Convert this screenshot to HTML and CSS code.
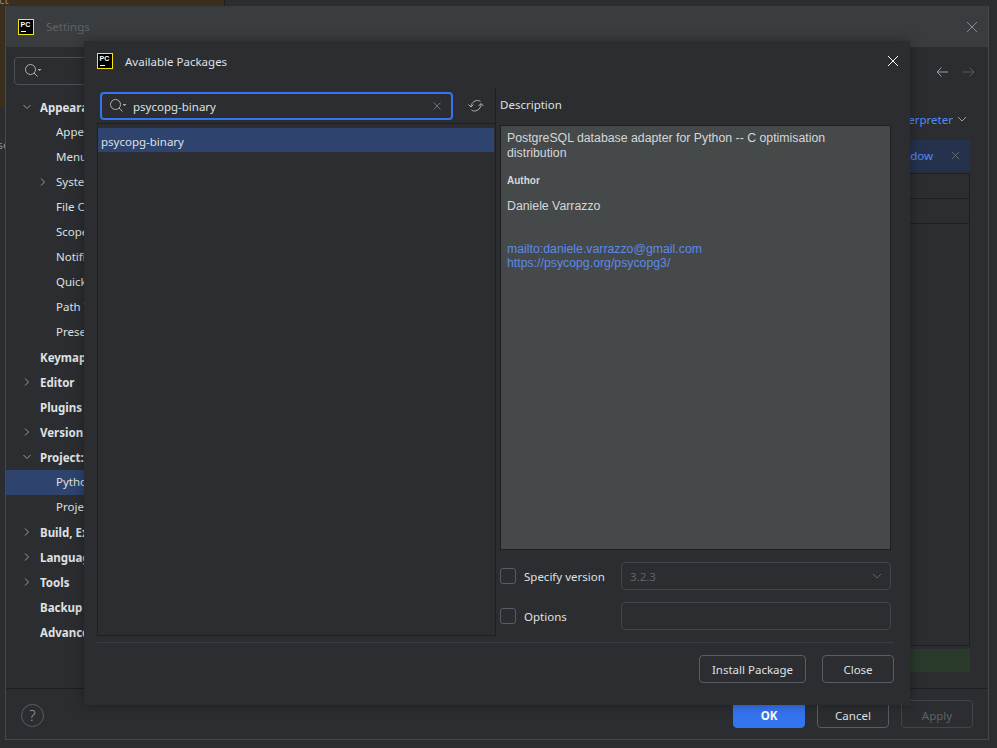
FILE: index.html
```html
<!DOCTYPE html>
<html>
<head>
    <title>Available Packages</title>
    <link rel="stylesheet" href="styles.css">
</head>
<body>
    <div class="desktop">
        <div class="project-strip"><span class="strip-text">Project</span></div>
        <span class="side-text">Use</span>

        <div class="settings">
            <div class="settings-title">
                <svg class="pc-icon" viewBox="0 0 16 16"><rect x="0.5" y="0.5" width="15" height="15" fill="#000" stroke="#f5e614"/><text x="2.500" y="8" class="pc-text">PC</text><rect x="3" y="12" width="5" height="1" fill="#fff"/></svg>
                <span class="settings-name">Settings</span>
                <svg class="close-icon dim" viewBox="0 0 12 12"><path d="M1 1l10 10M11 1L1 11"/></svg>
            </div>
            <div class="settings-body">
                <div class="sidebar">
                    <div class="side-search">
                        <svg class="search-icon" viewBox="0 0 17 14"><circle cx="5.500" cy="5.500" r="5"/><path d="M9 9l3.500 3.500"/><path class="caret" d="M12.500 5h4l-2 2z"/></svg>
                    </div>
                    <div class="tree">
                        <div class="row top"><svg class="chev" viewBox="0 0 10 10"><path d="M1.500 3l3.500 3.500L8.500 3"/></svg>Appearance &amp; Behavior</div>
                        <div class="row sub">Appearance</div>
                        <div class="row sub">Menus and Toolbars</div>
                        <div class="row sub"><svg class="chev" viewBox="0 0 10 10"><path d="M3 1.500l3.500 3.500L3 8.500"/></svg>System Settings</div>
                        <div class="row sub">File Colors</div>
                        <div class="row sub">Scopes</div>
                        <div class="row sub">Notifications</div>
                        <div class="row sub">Quick Lists</div>
                        <div class="row sub">Path Variables</div>
                        <div class="row sub">Presentation Assistant</div>
                        <div class="row top">Keymap</div>
                        <div class="row top"><svg class="chev" viewBox="0 0 10 10"><path d="M3 1.500l3.500 3.500L3 8.500"/></svg>Editor</div>
                        <div class="row top">Plugins</div>
                        <div class="row top"><svg class="chev" viewBox="0 0 10 10"><path d="M3 1.500l3.500 3.500L3 8.500"/></svg>Version Control</div>
                        <div class="row top"><svg class="chev" viewBox="0 0 10 10"><path d="M1.500 3l3.500 3.500L8.500 3"/></svg>Project: demo</div>
                        <div class="row sub selected">Python Interpreter</div>
                        <div class="row sub">Project Structure</div>
                        <div class="row top"><svg class="chev" viewBox="0 0 10 10"><path d="M3 1.500l3.500 3.500L3 8.500"/></svg>Build, Execution, Deployment</div>
                        <div class="row top"><svg class="chev" viewBox="0 0 10 10"><path d="M3 1.500l3.500 3.500L3 8.500"/></svg>Languages &amp; Frameworks</div>
                        <div class="row top"><svg class="chev" viewBox="0 0 10 10"><path d="M3 1.500l3.500 3.500L3 8.500"/></svg>Tools</div>
                        <div class="row top">Backup and Sync</div>
                        <div class="row top">Advanced Settings</div>
                    </div>
                </div>
                <div class="main">
                    <div class="nav-row">
                        <svg class="arrow" viewBox="0 0 14 12"><path d="M13 6H2M6.500 1.500L2 6l4.500 4.500"/></svg>
                        <svg class="arrow off" viewBox="0 0 14 12"><path d="M1 6h11M7.500 1.500L12 6l-4.500 4.500"/></svg>
                    </div>
                    <div class="interp-row">
                        <a class="link">Add Interpreter</a>
                        <svg class="chev open" viewBox="0 0 10 10"><path d="M1 3l4 4 4-4"/></svg>
                    </div>
                    <div class="banner">
                        <a class="link">Python Packages tool window</a>
                        <svg class="banner-x" viewBox="0 0 10 10"><path d="M1 1l8 8M9 1L1 9"/></svg>
                    </div>
                    <div class="pkg-table">
                        <div class="pkg-row"></div>
                        <div class="pkg-row"></div>
                    </div>
                    <div class="green-bar"></div>
                </div>
            </div>
            <div class="settings-foot">
                <div class="help">?</div>
                <div class="foot-buttons">
                    <button class="btn primary">OK</button>
                    <button class="btn">Cancel</button>
                    <button class="btn disabled">Apply</button>
                </div>
            </div>
        </div>

        <div class="dialog">
            <div class="dialog-title">
                <svg class="pc-icon" viewBox="0 0 16 16"><rect x="0.5" y="0.5" width="15" height="15" fill="#000" stroke="#f5e614"/><text x="2.500" y="8" class="pc-text">PC</text><rect x="3" y="12" width="5" height="1" fill="#fff"/></svg>
                <span class="dialog-name">Available Packages</span>
                <svg class="close-icon" viewBox="0 0 12 12"><path d="M1 1l10 10M11 1L1 11"/></svg>
            </div>
            <div class="split">
                <div class="left-col">
                    <div class="search-row">
                        <div class="search-box">
                            <svg class="search-icon" viewBox="0 0 17 14"><circle cx="5.500" cy="5.500" r="5"/><path d="M9 9l3.500 3.500"/><path class="caret" d="M12.500 5h4l-2 2z"/></svg>
                            <span class="search-text">psycopg-binary</span>
                            <svg class="clear-icon" viewBox="0 0 8 8"><path d="M0.500 0.500l7 7M7.500 0.500l-7 7"/></svg>
                        </div>
                        <svg class="refresh" viewBox="0 0 16 16"><path d="M3 9C3 5.500 6 2.500 9.500 2.500c1.500 0 2.500.5 3 1"/><path d="M0.500 6.500L3 9l2.500-2.500"/><path d="M13 6c0 4-3 7-6.500 7-1.500 0-2.500-.5-3-1"/><path d="M10.500 8L13 5.500 15.500 8"/></svg>
                    </div>
                    <div class="pkg-list">
                        <div class="pkg-item">psycopg-binary</div>
                    </div>
                </div>
                <div class="right-col">
                    <div class="desc-label">Description</div>
                    <div class="desc-panel">
                        <p class="desc-main">PostgreSQL database adapter for Python -- C optimisation<br>distribution</p>
                        <p class="desc-head">Author</p>
                        <p class="desc-author">Daniele Varrazzo</p>
                        <a class="desc-link mail">mailto:daniele.varrazzo@gmail.com</a>
                        <a class="desc-link">https://psycopg.org/psycopg3/</a>
                    </div>
                    <div class="opt-row first">
                        <span class="check"></span>
                        <span class="opt-label">Specify version</span>
                        <div class="field">
                            <span class="field-value">3.2.3</span>
                            <svg class="chev dimmed" viewBox="0 0 10 10"><path d="M1 3l4 4 4-4"/></svg>
                        </div>
                    </div>
                    <div class="opt-row">
                        <span class="check"></span>
                        <span class="opt-label">Options</span>
                        <div class="field"></div>
                    </div>
                </div>
            </div>
            <div class="dialog-sep"></div>
            <div class="dialog-buttons">
                <button class="btn install">Install Package</button>
                <button class="btn close">Close</button>
            </div>
        </div>
    </div>
</body>
</html>
```

FILE: styles.css
```css
html, body {
    margin: 0;
    height: 100%;
}
body {
    font-family: "Noto Sans", sans-serif;
    font-size: 11.5px;
    color: #dfe1e5;
    background-color: #2b2d30;
    overflow: hidden;
}
svg {
    fill: none;
    stroke-width: 1;
}
.desktop {
    position: relative;
    width: 997px;
    height: 748px;
    overflow: hidden;
}
.project-strip {
    position: absolute;
    left: 0;
    top: 0;
    width: 224px;
    height: 107px;
    background-color: #3a2f1e;
    border-right: 1px solid #1e1f22;
}
.strip-text {
    position: absolute;
    left: -29px;
    top: -8px;
    color: #8b8b85;
}
.side-text {
    position: absolute;
    left: -11px;
    top: 137px;
    color: #8b8f94;
}

/* settings window behind the dialog */
.settings {
    position: absolute;
    left: 5px;
    top: 6px;
    width: 982px;
    height: 733px;
    display: flex;
    flex-direction: column;
    background-color: #2b2d30;
    border: 1px solid #46484b;
    border-top: none;
}
.settings-title {
    height: 41px;
    flex: none;
    display: flex;
    align-items: center;
    padding: 0 10px 0 12px;
    background-color: #3a3d40;
}
.pc-icon {
    width: 16px;
    height: 16px;
    flex: none;
}
.pc-text {
    font-family: "Liberation Sans", sans-serif;
    font-size: 7px;
    font-weight: bold;
    fill: #fff;
}
.settings-name {
    margin-left: 12px;
    color: #5f6266;
}
.close-icon {
    width: 12px;
    height: 12px;
    margin-left: auto;
    stroke: #fff;
}
.close-icon.dim {
    stroke: #85888c;
}
.settings-body {
    flex: 1;
    min-height: 0;
    display: flex;
}
.sidebar {
    width: 219px;
    flex: none;
    padding-top: 10px;
}
.side-search {
    height: 26px;
    margin: 0 8px 10px;
    display: flex;
    align-items: center;
    padding-left: 10px;
    border: 1px solid #4e5157;
    border-radius: 4px;
}
.search-icon {
    width: 17px;
    height: 14px;
    flex: none;
    stroke: #afb1b3;
}
.caret {
    fill: #afb1b3;
    stroke: none;
}
.row {
    position: relative;
    height: 25px;
    line-height: 25px;
    white-space: nowrap;
}
.row.top {
    padding-left: 34px;
    font-weight: bold;
}
.row.sub {
    padding-left: 50px;
    line-height: 24px;
}
.row.selected {
    background-color: #2e436e;
}
.chev {
    width: 10px;
    height: 10px;
    stroke: #9b9ea3;
}
.row .chev {
    position: absolute;
    top: 7px;
    margin-left: -18px;
}
.main {
    flex: 1;
    min-width: 0;
    display: flex;
    flex-direction: column;
    padding-right: 18px;
}
.nav-row {
    height: 39px;
    flex: none;
    display: flex;
    justify-content: flex-end;
    align-items: flex-start;
    gap: 13px;
    padding-top: 19px;
    margin-right: -6px;
}
.arrow {
    width: 14px;
    height: 12px;
    stroke: #9b9ea3;
}
.arrow.off {
    stroke: #56585c;
}
.interp-row {
    height: 28px;
    flex: none;
    display: flex;
    justify-content: flex-end;
    align-items: center;
    gap: 4px;
    padding-right: 3px;
}
.link {
    color: #548af7;
}
.banner {
    height: 31px;
    flex: none;
    margin-top: 7px;
    display: flex;
    justify-content: flex-end;
    align-items: center;
    gap: 18px;
    padding-right: 10px;
    background-color: #25324d;
}
.banner-x {
    width: 9px;
    height: 9px;
    stroke: #6e7278;
}
.pkg-table {
    flex: 1;
    margin-top: 2px;
    border: 1px solid #1e1f22;
}
.pkg-row {
    height: 24px;
    border-bottom: 1px solid #1e1f22;
}
.green-bar {
    height: 23px;
    flex: none;
    margin-top: 3px;
    margin-bottom: 16px;
    background-color: #2a3a2b;
}
.settings-foot {
    height: 50px;
    flex: none;
    display: flex;
    align-items: center;
    justify-content: space-between;
    padding: 0 15px 0 15px;
    border-top: 1px solid #1e1f22;
}
.help {
    width: 21px;
    height: 21px;
    margin-top: 2px;
    text-align: center;
    line-height: 21px;
    font-size: 15px;
    font-weight: 300;
    color: #9b9ea3;
    border: 1px solid #5a5d63;
    border-radius: 50%;
}
.foot-buttons {
    display: flex;
    gap: 12px;
}
.btn {
    height: 28px;
    width: 72px;
    padding: 2px 0 0;
    font-family: "Noto Sans", sans-serif;
    font-size: 11.5px;
    color: #dfe1e5;
    background-color: #2b2d30;
    border: 1px solid #5a5d63;
    border-radius: 4px;
}
.btn.primary {
    color: #fff;
    font-weight: bold;
    background-color: #3574f0;
    border-color: #3574f0;
}
.btn.disabled {
    color: #5f6266;
    border-color: #43454a;
}

/* package dialog on top */
.dialog {
    position: absolute;
    left: 84px;
    top: 41px;
    width: 797px;
    height: 664px;
    padding: 0 16px 0 13px;
    display: flex;
    flex-direction: column;
    background-color: #2b2d30;
    box-shadow: 0 0 12px rgba(0, 0, 0, 0.35);
}
.dialog-title {
    height: 40px;
    flex: none;
    display: flex;
    align-items: center;
}
.dialog-title .close-icon {
    margin-right: -5px;
}
.dialog-name {
    margin-left: 12px;
}
.split {
    flex: 1;
    min-height: 0;
    margin-top: 7px;
    display: flex;
}
.left-col {
    width: 398px;
    flex: none;
    display: flex;
    flex-direction: column;
    border-right: 1px solid #1e1f22;
}
.search-row {
    flex: none;
    display: flex;
    align-items: center;
    padding: 4px 0 0 3px;
}
.search-box {
    width: 349px;
    height: 24px;
    flex: none;
    display: flex;
    align-items: center;
    border: 2px solid #3574f0;
    border-radius: 4px;
}
.search-box .search-icon {
    margin-left: 8px;
}
.search-text {
    margin-left: 6px;
}
.clear-icon {
    width: 8px;
    height: 8px;
    margin-left: auto;
    margin-right: 10px;
    stroke: #6e7278;
}
.refresh {
    width: 16px;
    height: 16px;
    margin-left: 15px;
    stroke: #afb1b3;
}
.pkg-list {
    flex: 1;
    margin-top: 3px;
    padding: 4px 1px 0 0;
    border: 1px solid #1e1f22;
    border-right: none;
}
.pkg-item {
    height: 24px;
    line-height: 27px;
    padding-left: 3px;
    background-color: #2e436e;
}
.right-col {
    flex: 1;
    min-width: 0;
    display: flex;
    flex-direction: column;
    padding: 0 3px 0 4px;
}
.desc-label {
    height: 37px;
    line-height: 34px;
    flex: none;
}
.desc-panel {
    height: 423px;
    flex: none;
    padding: 0 6px;
    font-family: "Liberation Sans", sans-serif;
    font-size: 12.3px;
    color: #d5d7d8;
    background-color: #46494a;
    border: 1px solid #1e1f22;
}
.desc-panel p {
    margin: 0;
}
.desc-main {
    padding-top: 5px;
    line-height: 15px;
}
.desc-head {
    padding-top: 14px;
    line-height: 12px;
    font-size: 10px;
    font-weight: bold;
}
.desc-author {
    padding-top: 12px;
    line-height: 14px;
}
.desc-link {
    display: block;
    line-height: 14px;
    color: #5b8ae6;
}
.desc-link.mail {
    margin-top: 29px;
}
.opt-row {
    height: 28px;
    flex: none;
    margin-top: 12px;
    display: flex;
    align-items: center;
}
.check {
    width: 14px;
    height: 14px;
    flex: none;
    border: 1px solid #5a5d63;
    border-radius: 3px;
}
.opt-label {
    width: 97px;
    flex: none;
    margin-left: 8px;
}
.field {
    flex: 1;
    height: 26px;
    display: flex;
    align-items: center;
    padding: 0 8px;
    color: #5f6266;
    border: 1px solid #43454a;
    border-radius: 4px;
}
.chev.dimmed {
    margin-left: auto;
    stroke: #5f6266;
}
.dialog-sep {
    height: 1px;
    flex: none;
    margin-top: 6px;
    background-color: #393b40;
}
.dialog-buttons {
    flex: none;
    display: flex;
    justify-content: flex-end;
    gap: 16px;
    margin: 12px 0 22px;
}
.btn.install {
    width: 107px;
    padding-top: 1px;
}
.btn.close {
    width: 72px;
    padding-top: 1px;
}
```
